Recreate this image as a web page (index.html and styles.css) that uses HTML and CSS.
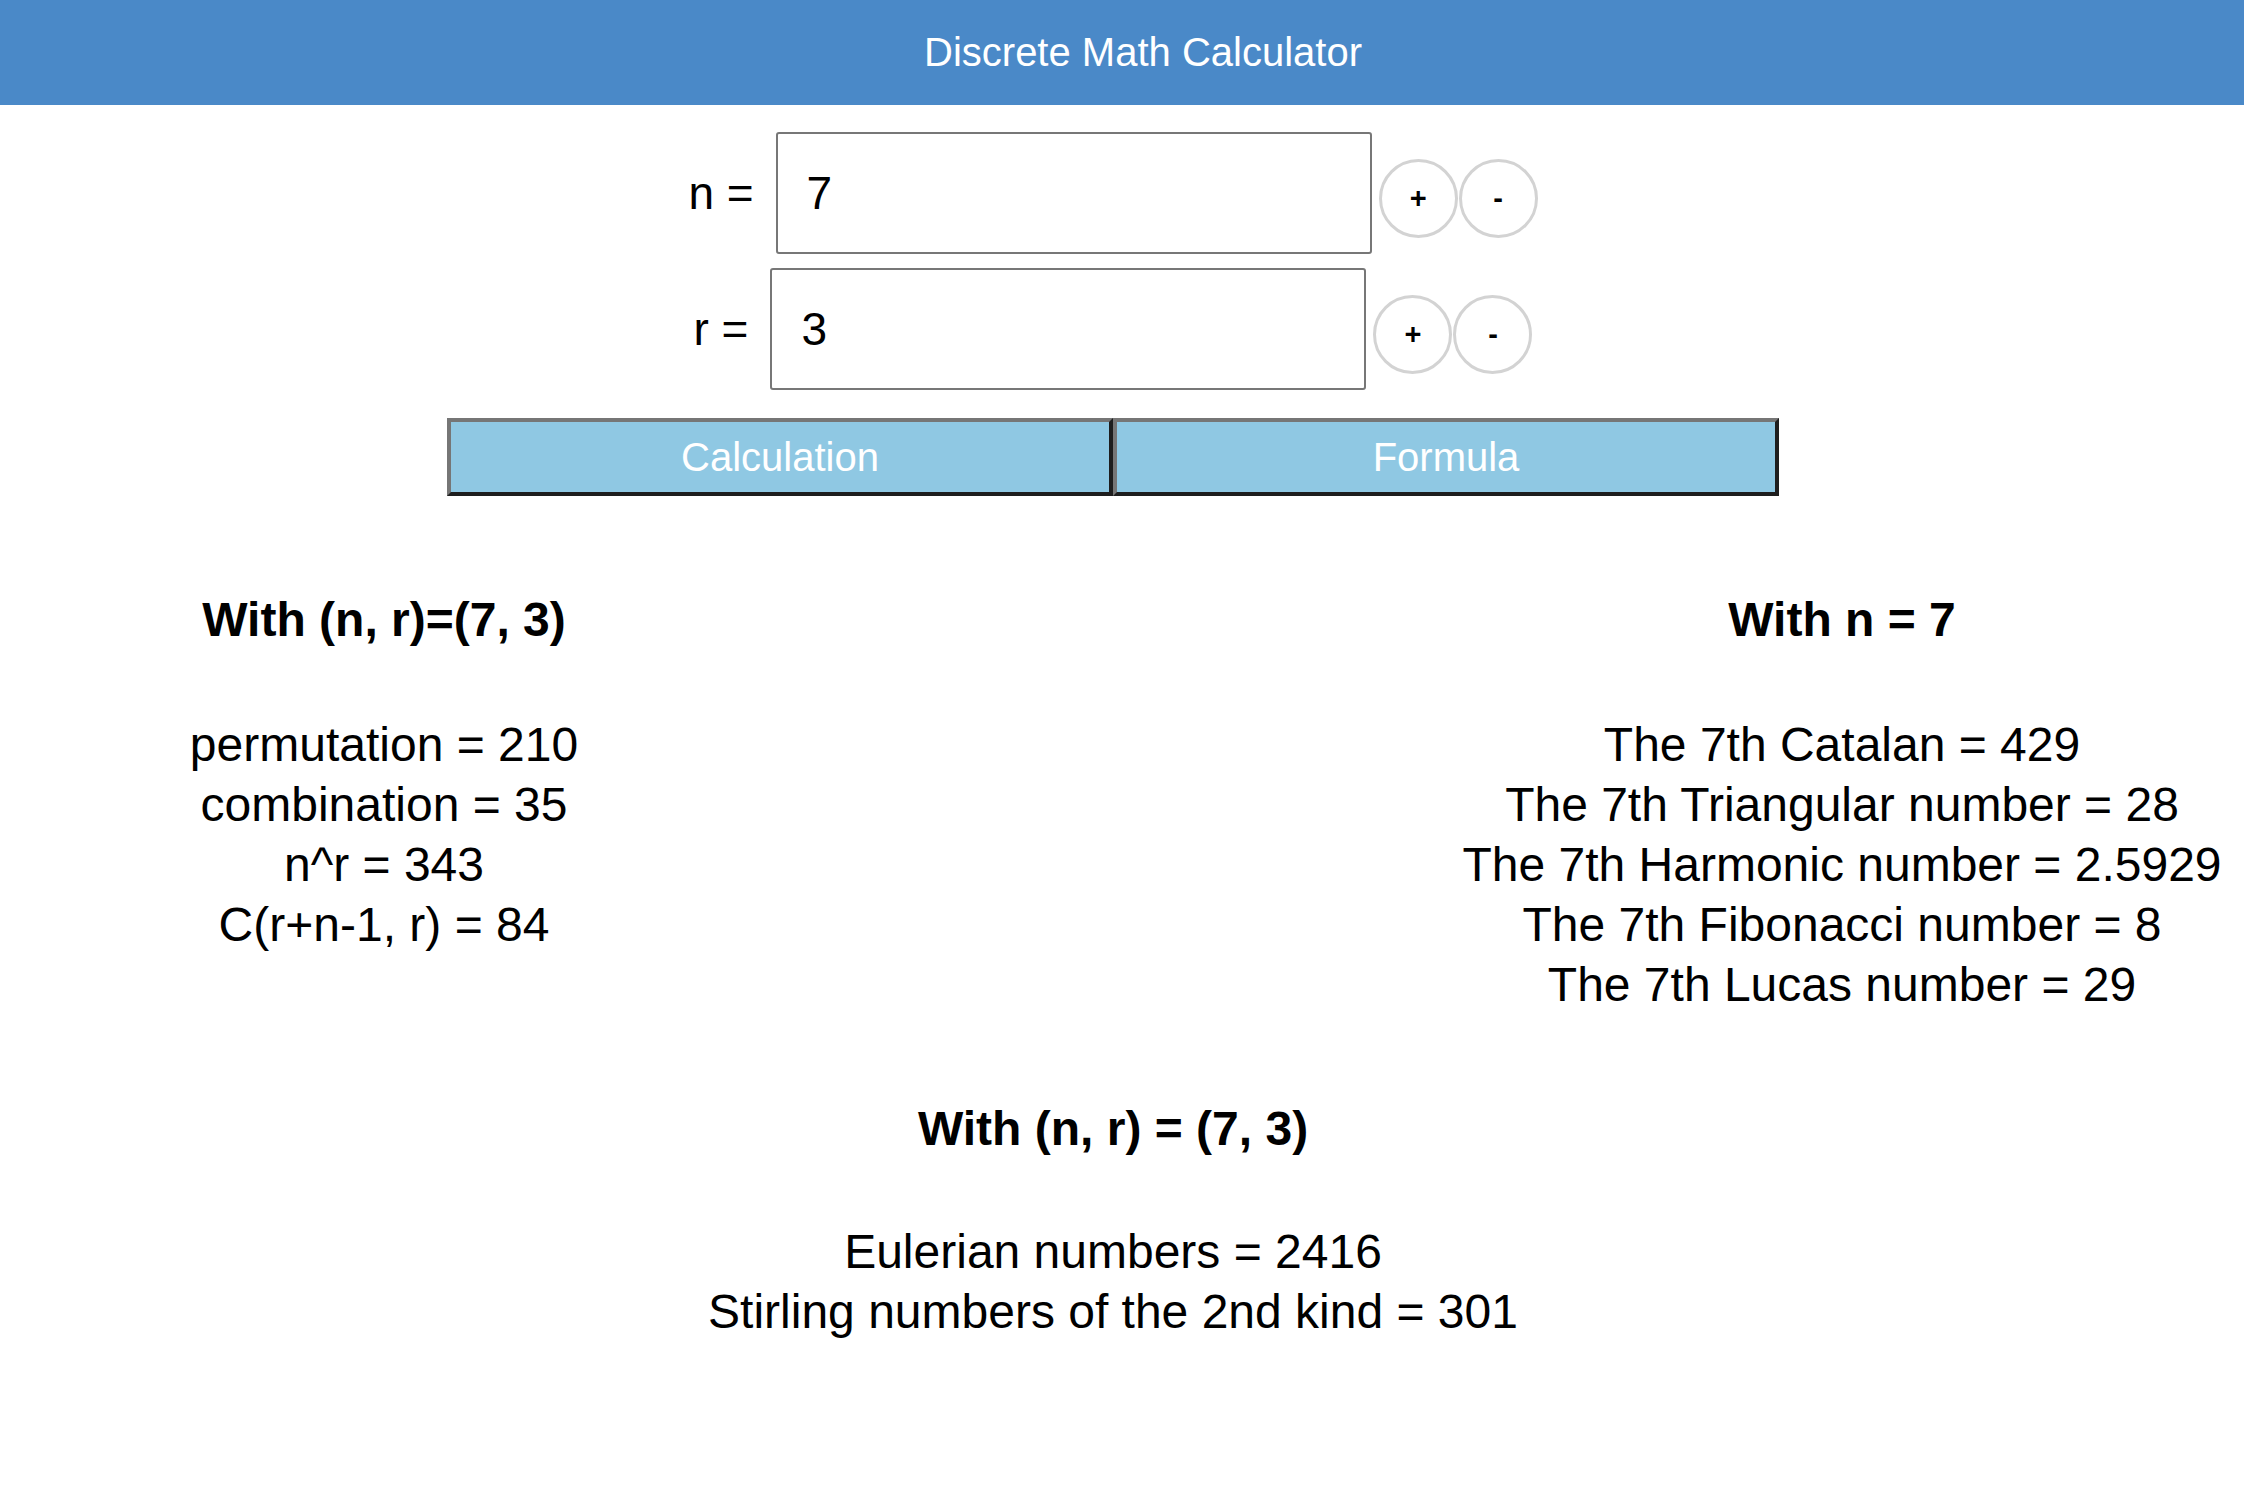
FILE: index.html
```html
<!DOCTYPE html>
<html lang="en">
<head>
<meta charset="utf-8">
<title>Discrete Math Calculator</title>
<link rel="stylesheet" href="styles.css">
</head>
<body>
<header class="topbar">
  <h1 class="title">Discrete Math Calculator</h1>
</header>
<main class="page">
  <div class="field-row">
    <label class="field-label" for="n">n =</label>
    <input class="field-input" id="n" type="text" value="7">
    <button class="step step-first">+</button>
    <button class="step">-</button>
  </div>
  <div class="field-row">
    <label class="field-label" for="r">r =</label>
    <input class="field-input" id="r" type="text" value="3">
    <button class="step step-first">+</button>
    <button class="step">-</button>
  </div>
  <div class="tabs">
    <button class="tab">Calculation</button>
    <button class="tab">Formula</button>
  </div>
  <section class="results">
    <div class="col">
      <h2 class="heading">With (n, r)=(7, 3)</h2>
      <p class="line">permutation = 210</p>
      <p class="line">combination = 35</p>
      <p class="line">n^r = 343</p>
      <p class="line">C(r+n-1, r) = 84</p>
    </div>
    <div class="col">
      <h2 class="heading">With n = 7</h2>
      <p class="line">The 7th Catalan = 429</p>
      <p class="line">The 7th Triangular number = 28</p>
      <p class="line">The 7th Harmonic number = 2.5929</p>
      <p class="line">The 7th Fibonacci number = 8</p>
      <p class="line">The 7th Lucas number = 29</p>
    </div>
  </section>
  <section class="extra">
    <h2 class="heading heading-extra">With (n, r) = (7, 3)</h2>
    <p class="line">Eulerian numbers = 2416</p>
    <p class="line">Stirling numbers of the 2nd kind = 301</p>
  </section>
</main>
</body>
</html>
```
FILE: styles.css
```css
* {
  box-sizing: border-box;
}

body {
  margin: 0;
  background: #ffffff;
  color: #000000;
  font-family: "Liberation Sans", Arial, Helvetica, sans-serif;
}

.topbar {
  height: 105px;
  background: #4a89c8;
  display: flex;
  justify-content: center;
  align-items: center;
  padding-left: 42px;
}

.title {
  margin: 0;
  font-size: 40px;
  font-weight: normal;
  line-height: 105px;
  color: #ffffff;
}

.page {
  padding-right: 18px;
}

.field-row {
  display: flex;
  justify-content: center;
  align-items: flex-start;
  margin-top: 27px;
}

.field-row + .field-row {
  margin-top: 14px;
}

.field-label {
  font-size: 46px;
  line-height: 122px;
  margin-right: 22px;
}

.field-input {
  width: 596px;
  height: 122px;
  margin: 0;
  border: 2px solid #777777;
  border-radius: 3px;
  padding: 0 0 0 29px;
  font-family: "Liberation Sans", Arial, Helvetica, sans-serif;
  font-size: 46px;
  color: #000000;
  background: #ffffff;
}

.step {
  width: 79px;
  height: 79px;
  margin: 27px 0 0 1px;
  padding: 0;
  border: 3px solid #d3d3d3;
  border-radius: 50%;
  background: #ffffff;
  color: #000000;
  font-family: "Liberation Sans", Arial, Helvetica, sans-serif;
  font-size: 29px;
  font-weight: bold;
  line-height: 1;
}

.step-first {
  margin-left: 7px;
}

.tabs {
  display: flex;
  justify-content: center;
  margin-top: 28px;
}

.tab {
  width: 666px;
  height: 78px;
  margin: 0;
  padding: 0;
  border: 4px solid;
  border-color: #767676 #1e1e1e #1e1e1e #767676;
  background: #8fc8e3;
  color: #ffffff;
  font-family: "Liberation Sans", Arial, Helvetica, sans-serif;
  font-size: 40px;
}

.results {
  display: flex;
  justify-content: space-between;
  margin-top: 94px;
}

.col {
  width: 768px;
  text-align: center;
}

.heading {
  margin: 0 0 65px;
  font-size: 48px;
  font-weight: bold;
  line-height: 60px;
}

.heading-extra {
  margin-bottom: 63px;
}

.line {
  margin: 0;
  font-size: 48px;
  line-height: 60px;
}

.extra {
  margin-top: 84px;
  text-align: center;
}
```
